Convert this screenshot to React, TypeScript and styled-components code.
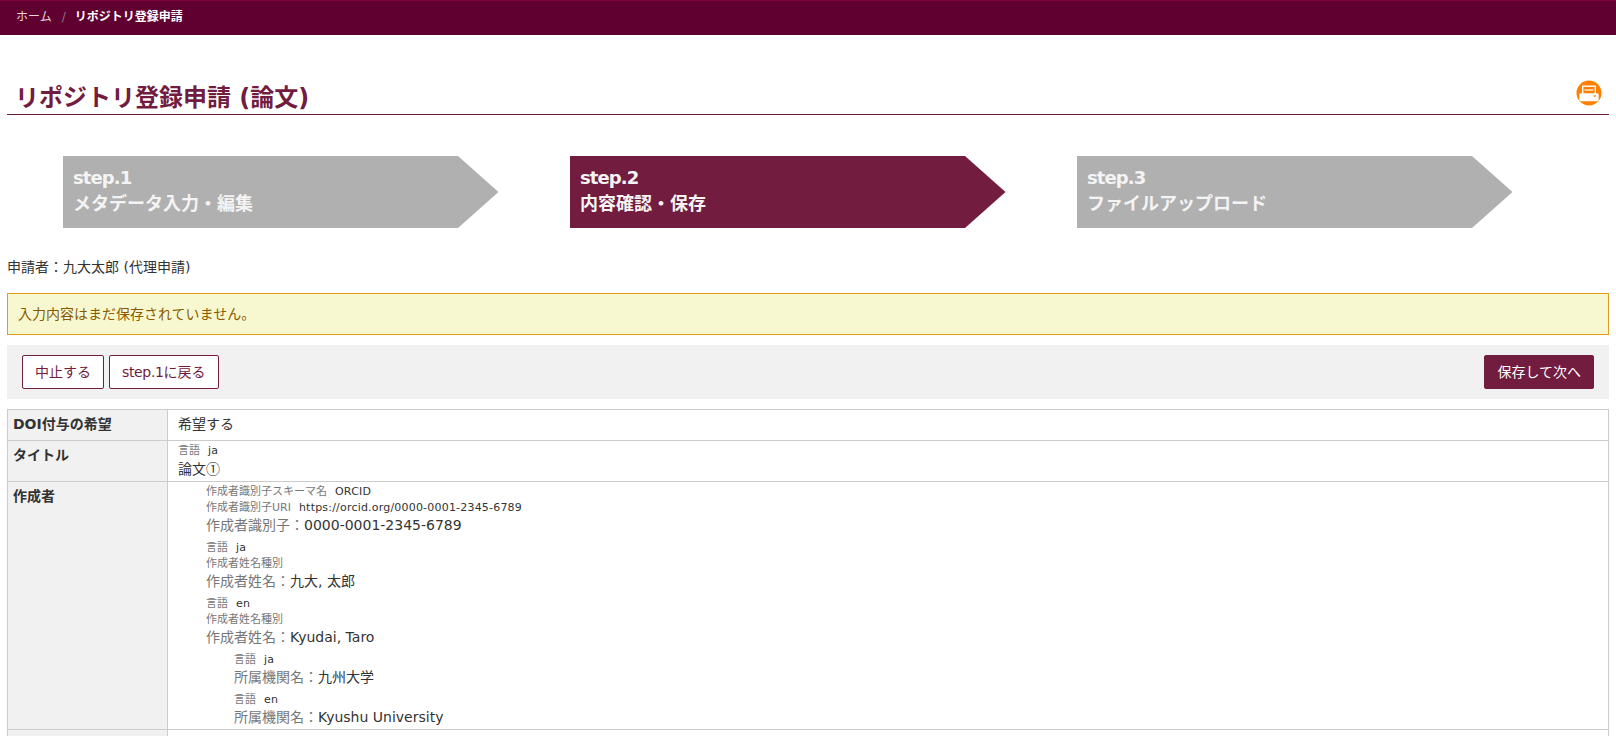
import React from "react";
import styled, { createGlobalStyle } from "styled-components";

const Global = createGlobalStyle`
  html, body { margin: 0; padding: 0; background: #fff; overflow: hidden; height: 736px; }
  body { font-family: "DejaVu Sans", "Noto Sans CJK JP", sans-serif; font-size: 14px; color: #333; text-spacing-trim: space-all; }
  * { box-sizing: border-box; }
`;

const Crumbs = styled.nav`
  height: 35px; background: #600030; border-top: 1px solid #7a0040; border-bottom: 1px solid #5a002c;
  display: flex; align-items: center; padding: 0 16px 2px; font-size: 12px; line-height: 18px;
`;
const CrumbLink = styled.span`color: #e6d5dc;`;
const CrumbSep = styled.span`color: #96707f; margin: 0 9px 0 10px;`;
const CrumbNow = styled.span`color: #fff; font-weight: 700;`;

const Main = styled.main`padding: 0 7px;`;
const TitleRow = styled.header`
  margin-top: 42px; height: 38px; border-bottom: 1px solid #721c3f;
  display: flex; align-items: center; justify-content: space-between; padding: 0 0 0 8px;
`;
const Title = styled.h1`margin: 4px 0 0; font-size: 24px; line-height: 36px; font-weight: 700; color: #721c3f;`;
const PrintBtn = styled.span`display: block; width: 26px; height: 26px; margin: -5px 7px 0 0;`;

const Steps = styled.ol`
  list-style: none; margin: 41px 0 0; padding: 0 0 0 56px;
  display: grid; grid-template-columns: repeat(3, 435.5px); column-gap: 71.5px;
`;
const Step = styled.li<{ $active?: boolean }>`
  height: 72px; padding: 9px 10px; background: ${(p) => (p.$active ? "#721c3f" : "#b0b0b0")};
  clip-path: polygon(0 0, 395px 0, 100% 50%, 395px 100%, 0 100%);
  color: #f4f4f4; font-size: 18px; line-height: 26px; font-weight: 700;
`;
const StepNumber = styled.div`letter-spacing: -0.9px;`;
const StepName = styled.div``;

const Applicant = styled.p`margin: 29px 0 0; line-height: 20px;`;
const Alert = styled.div`
  margin-top: 16px; height: 42px; padding: 0 10px 3px; display: flex; align-items: center;
  background: #f8f8d0; border: 1px solid #e09b20; color: #8a5a00;
`;
const Toolbar = styled.div`
  margin-top: 10px; height: 54px; background: #f1f1f1; padding: 0 15px;
  display: flex; align-items: center; gap: 5px;
`;
const Button = styled.button<{ $primary?: boolean }>`
  height: 34px; padding: 0 12px 3px; font: inherit; border-radius: 2px; border: 1px solid #721c3f;
  background: ${(p) => (p.$primary ? "#721c3f" : "#fff")};
  color: ${(p) => (p.$primary ? "#fff" : "#721c3f")};
  margin-left: ${(p) => (p.$primary ? "auto" : "0")};
`;
const ButtonLatin = styled.span`letter-spacing: -0.35px;`;

const Table = styled.table`
  margin-top: 10px; width: 100%; border-collapse: collapse; table-layout: fixed; border: 1px solid #ccc;
`;
const Label = styled.th`
  width: 160px; padding: 4px 5px 6px; text-align: left; vertical-align: top; background: #f1f1f1;
  border: 1px solid #ccc; font-weight: 700; font-size: 14px; line-height: 20px; color: #333;
`;
const Cell = styled.td<{ $middle?: boolean }>`
  padding: ${(p) => (p.$middle ? "1px 10px 3px" : "2px 10px 1px")};
  vertical-align: ${(p) => (p.$middle ? "middle" : "top")};
  border: 1px solid #ccc; line-height: 20px;
`;
const Group = styled.div<{ $indent: number }>`
  padding-left: ${(p) => p.$indent}px; margin-bottom: 5px;
  &:last-child { margin-bottom: 0; }
`;
const Meta = styled.div`font-size: 11px; line-height: 16px; color: #333;`;
const MetaKey = styled.span`color: #777; margin-right: 8px;`;
const MetaValue = styled.span`letter-spacing: 0.2px;`;
const Field = styled.div`font-size: 14px; line-height: 20px; margin: -1px 0 1px; color: #333;`;
const FieldKey = styled.span`color: #777;`;
const Cjk = styled.span`font-family: "Noto Sans CJK JP", sans-serif;`;

const Printer = () => (
  <svg width="26" height="26" viewBox="0 0 26 26" aria-hidden="true">
    <circle cx="13" cy="13" r="12.5" fill="#ff7f00" />
    <rect x="6.7" y="6.2" width="12.6" height="9" fill="none" stroke="#fff" strokeWidth="1.4" />
    <path d="M8.5 10h9" stroke="#fff" strokeWidth="1.2" />
    <rect x="3.3" y="13.3" width="19.4" height="8" rx="1.5" fill="#fff" />
    <rect x="17.7" y="15.2" width="2" height="1.6" fill="#ff7f00" />
  </svg>
);

const M = ({ k, v }: { k: string; v?: string }) => (
  <Meta><MetaKey>{k}</MetaKey><MetaValue>{v}</MetaValue></Meta>
);
const F = ({ k, v }: { k: string; v: string }) => (
  <Field><FieldKey>{k}：</FieldKey>{v}</Field>
);

export default function App() {
  return (
    <>
      <Global />
      <Crumbs>
        <CrumbLink>ホーム</CrumbLink>
        <CrumbSep>/</CrumbSep>
        <CrumbNow>リポジトリ登録申請</CrumbNow>
      </Crumbs>
      <Main>
        <TitleRow>
          <Title>リポジトリ登録申請 (論文)</Title>
          <PrintBtn><Printer /></PrintBtn>
        </TitleRow>
        <Steps>
          <Step><StepNumber>step.1</StepNumber><StepName>メタデータ入力・編集</StepName></Step>
          <Step $active><StepNumber>step.2</StepNumber><StepName>内容確認・保存</StepName></Step>
          <Step><StepNumber>step.3</StepNumber><StepName>ファイルアップロード</StepName></Step>
        </Steps>
        <Applicant>申請者：九大太郎 (代理申請)</Applicant>
        <Alert>入力内容はまだ保存されていません。</Alert>
        <Toolbar>
          <Button>中止する</Button>
          <Button><ButtonLatin>step.1</ButtonLatin>に戻る</Button>
          <Button $primary>保存して次へ</Button>
        </Toolbar>
        <Table>
          <tbody>
            <tr>
              <Label>DOI付与の希望</Label>
              <Cell $middle>希望する</Cell>
            </tr>
            <tr>
              <Label>タイトル</Label>
              <Cell><M k="言語" v="ja" /><Field><Cjk>論文①</Cjk></Field></Cell>
            </tr>
            <tr>
              <Label>作成者</Label>
              <Cell>
                <Group $indent={28}>
                  <M k="作成者識別子スキーマ名" v="ORCID" />
                  <M k="作成者識別子URI" v="https://orcid.org/0000-0001-2345-6789" />
                  <F k="作成者識別子" v="0000-0001-2345-6789" />
                </Group>
                <Group $indent={28}>
                  <M k="言語" v="ja" />
                  <M k="作成者姓名種別" />
                  <F k="作成者姓名" v="九大, 太郎" />
                </Group>
                <Group $indent={28}>
                  <M k="言語" v="en" />
                  <M k="作成者姓名種別" />
                  <F k="作成者姓名" v="Kyudai, Taro" />
                </Group>
                <Group $indent={56}>
                  <M k="言語" v="ja" />
                  <F k="所属機関名" v="九州大学" />
                </Group>
                <Group $indent={56}>
                  <M k="言語" v="en" />
                  <F k="所属機関名" v="Kyushu University" />
                </Group>
              </Cell>
            </tr>
            <tr>
              <Label>&nbsp;</Label>
              <Cell>&nbsp;</Cell>
            </tr>
          </tbody>
        </Table>
      </Main>
    </>
  );
}
